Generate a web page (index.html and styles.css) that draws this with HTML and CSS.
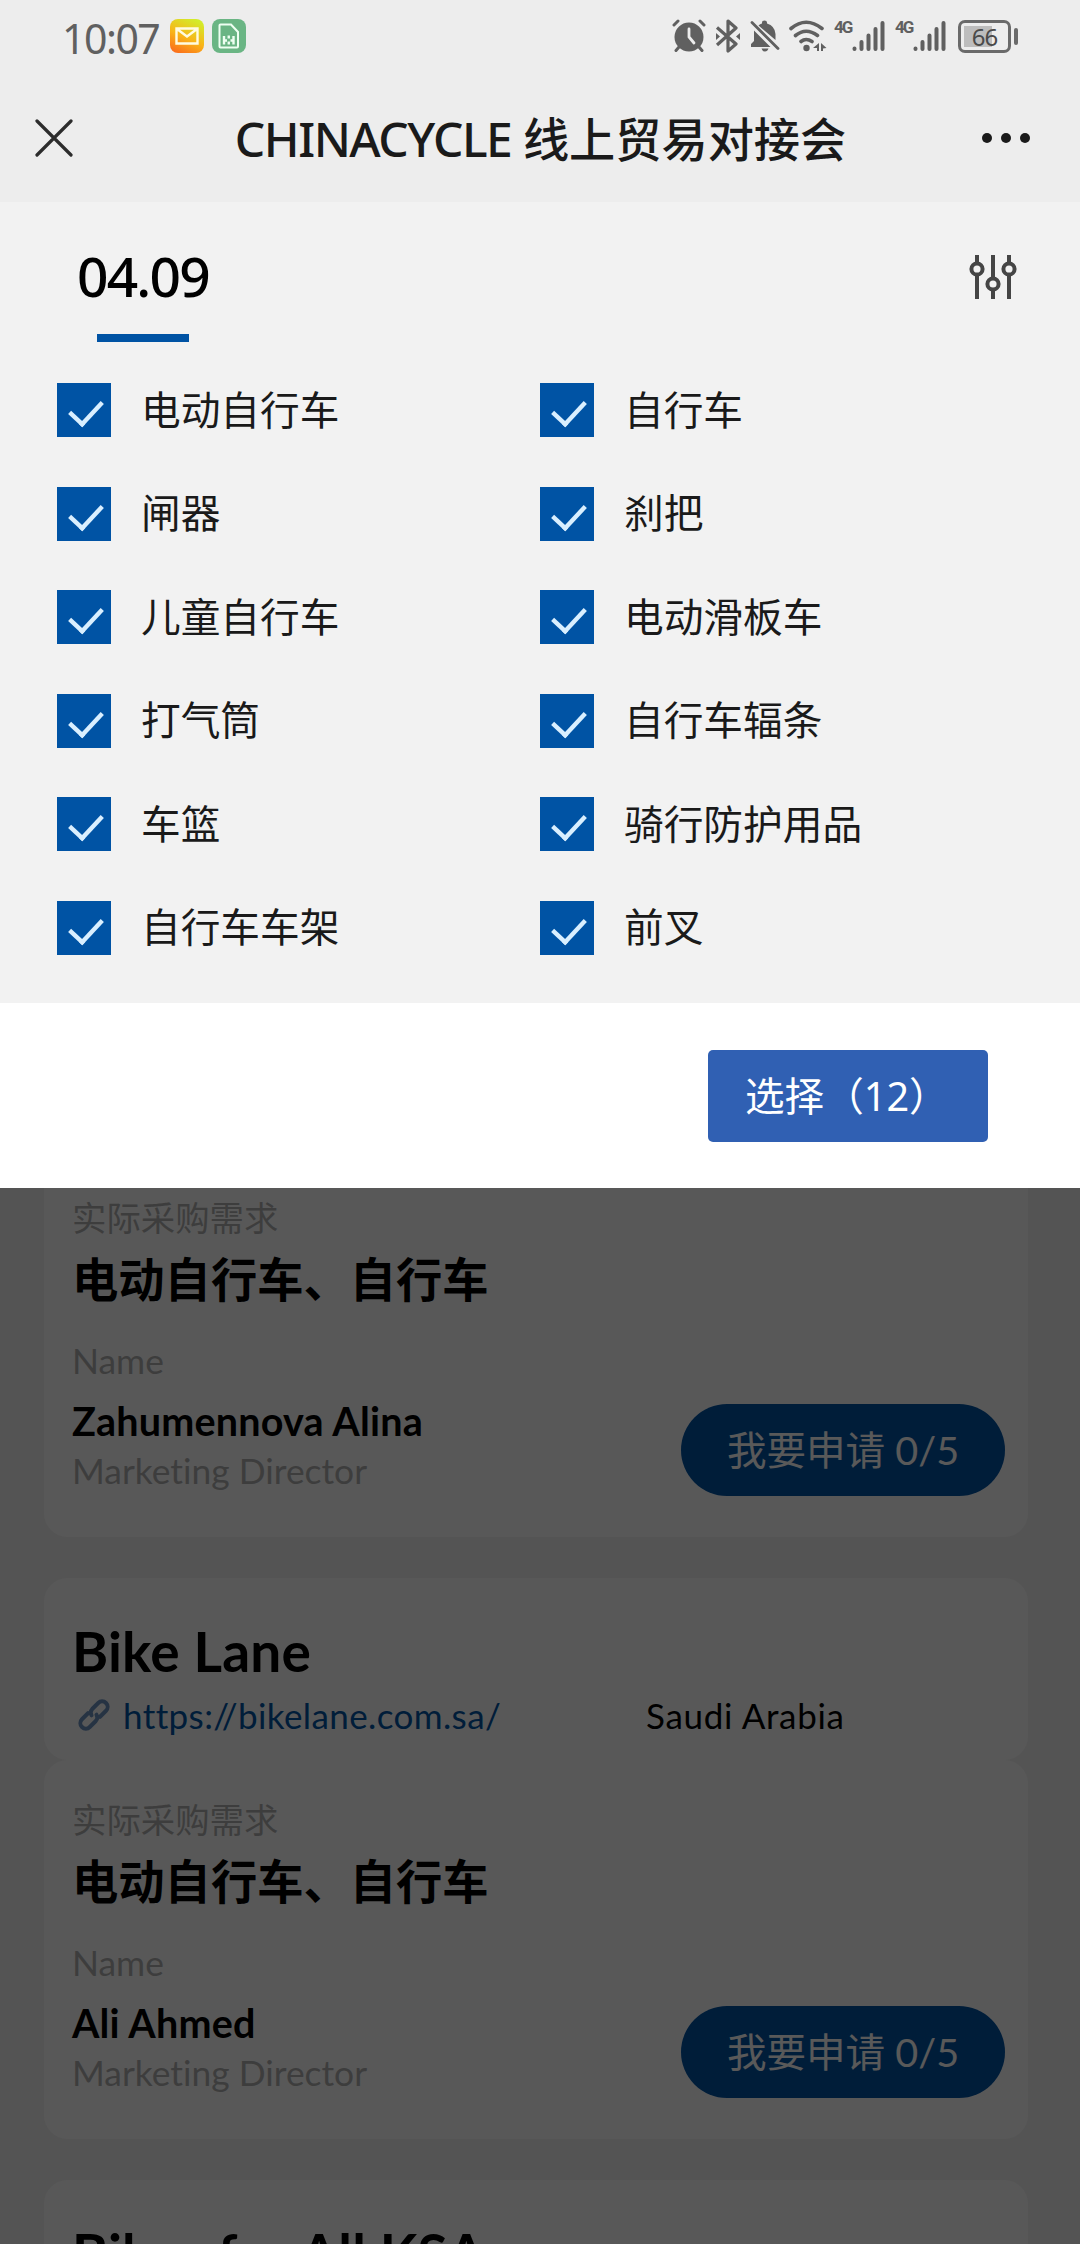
FILE: index.html
```html
<!DOCTYPE html>
<html lang="zh-CN">
<head>
    <meta charset="UTF-8">
    <meta name="viewport" content="width=device-width, initial-scale=1.0">
    <title>CHINACYCLE 线上贸易对接会</title>
    <link rel="stylesheet" href="styles.css">
</head>
<body>

<!-- 状态栏 -->
<div class="status-bar">
    <span class="time">10:07</span>
    <span class="app-icon mail">
        <svg width="24" height="18" viewBox="0 0 24 18" fill="none" stroke="#fffbe0" stroke-width="2.4"><path d="M1.5 1.5h21v15h-21zM2 2l10 7.500L22 2"/></svg>
    </span>
    <span class="app-icon sim">
        <svg width="22" height="26" viewBox="0 0 22 26" fill="none" stroke="#eefff2" stroke-width="2"><path d="M1.500 2.500a1 1 0 0 1 1-1H13l7 7.500v14.500a1 1 0 0 1-1 1H2.500a1 1 0 0 1-1-1z"/><path stroke-width="2.400" d="M6 13v8.500M15.500 13v8.500M10.750 12.500v3M10.750 18.500v3M6 17.500h3M12.500 17.500h3"/></svg>
    </span>
    <div class="status-icons">
        <svg width="34" height="34" viewBox="0 0 34 34" fill="none" stroke="#606060" stroke-width="3" stroke-linecap="round"><circle cx="17" cy="18" r="14.500" fill="#606060" stroke="none"/><path d="M2 6l4-4M32 6l-4-4M7 28l-3 3.500M27 28l3 3.500"/><path stroke="#ededed" stroke-width="2.800" d="M17 10v8l5 6"/></svg>
        <svg class="bluetooth" width="26" height="34" viewBox="0 0 26 34" fill="none" stroke="#606060" stroke-width="3.200" stroke-linejoin="round"><path d="M2 8.500L21 25l-8 7V2l8 7L2 26"/><path fill="#606060" stroke="none" d="M1 14v7l4-3.500zM25 14v7l-4-3.500z"/></svg>
        <svg class="mute" width="30" height="34" viewBox="0 0 30 34"><path fill="#606060" d="M4 11.500L20.500 28H1v-3l3-3zM8.500 6.500Q10 5 12 4.500V3.500Q12 1.500 14.500 1.500T17 3.500v1Q25 7 25.500 15v6zM11.500 29.500h7q-1 3-3.500 3t-3.500-3z"/><path stroke="#606060" stroke-width="2.800" stroke-linecap="round" d="M2 3.500l26 26"/></svg>
        <svg class="wifi" width="39" height="34" viewBox="0 0 39 34" fill="none" stroke="#606060" stroke-width="3.600" stroke-linecap="round"><path d="M3 9.500Q18 -3 34 9.500M7.500 16.500Q18 8 29.500 16.500M13 22.500Q18 18.500 24 22.500"/><circle cx="18.500" cy="29" r="3.200" fill="#606060" stroke="none"/><path fill="#606060" stroke="none" d="M31 24v8h-2v-3h-4zM33 24v8h2v-2.500l3.500-.5z"/></svg>
        <span class="signal">
            <b>4G</b>
            <svg width="33" height="32" viewBox="0 0 33 32" stroke="#606060" stroke-width="4" stroke-linecap="round"><path d="M2.500 28.500v.5M9.500 22v7M16.500 15.500v13.500M23.500 9v20M30.500 3v26"/></svg>
        </span>
        <span class="signal">
            <b>4G</b>
            <svg width="33" height="32" viewBox="0 0 33 32" stroke="#606060" stroke-width="4" stroke-linecap="round"><path d="M2.500 28.500v.5M9.500 22v7M16.500 15.500v13.500M23.500 9v20M30.500 3v26"/></svg>
        </span>
        <span class="battery">66</span>
        <i class="battery-cap"></i>
    </div>
</div>

<!-- 標題列 -->
<div class="nav-bar">
    <svg class="close" width="38" height="38" viewBox="0 0 38 38" stroke="#2c2c2c" stroke-width="3.200" stroke-linecap="round"><path d="M2 2l34 34M36 2L2 36"/></svg>
    <h1 class="title"><span>CHINACYCLE</span> 线上贸易对接会</h1>
    <div class="more"><i></i><i></i><i></i></div>
</div>

<!-- 篩選面板 -->
<div class="filter">
    <div class="filter-head">
        <div class="date">04.09</div>
        <svg width="48" height="46" viewBox="0 0 48 46" fill="none" stroke="#454545" stroke-width="4"><path d="M8 1v8M8 21v24M24 1v23M24 36v9M40 1v8M40 21v24"/><circle cx="8" cy="15" r="5.600"/><circle cx="24" cy="30" r="5.600"/><circle cx="40" cy="15" r="5.600"/></svg>
    </div>
    <div class="options">
        <label class="option"><i class="check"></i>电动自行车</label>
        <label class="option"><i class="check"></i>自行车</label>
        <label class="option"><i class="check"></i>闸器</label>
        <label class="option"><i class="check"></i>刹把</label>
        <label class="option"><i class="check"></i>儿童自行车</label>
        <label class="option"><i class="check"></i>电动滑板车</label>
        <label class="option"><i class="check"></i>打气筒</label>
        <label class="option"><i class="check"></i>自行车辐条</label>
        <label class="option"><i class="check"></i>车篮</label>
        <label class="option"><i class="check"></i>骑行防护用品</label>
        <label class="option"><i class="check"></i>自行车车架</label>
        <label class="option"><i class="check"></i>前叉</label>
    </div>
</div>
<div class="filter-foot">
    <button class="select-btn">选择（<span>12</span>）</button>
</div>

<!-- 買家列表 -->
<div class="list">
    <div class="card">
        <div class="card-body first">
            <p class="label">实际采购需求</p>
            <p class="demand">电动自行车、自行车</p>
            <div class="contact">
                <div>
                    <p class="label">Name</p>
                    <p class="name">Zahumennova Alina</p>
                    <p class="label">Marketing Director</p>
                </div>
                <button class="apply-btn">我要申请 0/5</button>
            </div>
        </div>
    </div>

    <div class="card">
        <div class="card-head">
            <h2 class="company">Bike Lane</h2>
            <div class="info">
                <svg width="32" height="34" viewBox="0 0 32 34" fill="none" stroke="#6d93c0" stroke-width="4" stroke-linecap="round"><g transform="rotate(-45 16 17)"><path d="M13 11.500H4.500a5.500 5.500 0 0 0 0 11H13a5.500 5.500 0 0 0 5-4M19 22.500h8.500a5.500 5.500 0 0 0 0-11H19a5.500 5.500 0 0 0-5 4"/></g></svg>
                <a class="link">https://bikelane.com.sa/</a>
                <span class="country">Saudi Arabia</span>
            </div>
        </div>
        <div class="card-body">
            <p class="label">实际采购需求</p>
            <p class="demand">电动自行车、自行车</p>
            <div class="contact">
                <div>
                    <p class="label">Name</p>
                    <p class="name">Ali Ahmed</p>
                    <p class="label">Marketing Director</p>
                </div>
                <button class="apply-btn">我要申请 0/5</button>
            </div>
        </div>
    </div>

    <div class="card">
        <div class="card-head">
            <h2 class="company">Bikes for All KSA</h2>
        </div>
    </div>

    <div class="mask"></div>
</div>

</body>
</html>
```

FILE: styles.css
```css
* {
    box-sizing: border-box;
}

body {
    font-family: Lato, "Noto Sans CJK SC", sans-serif;
    font-variant-ligatures: none;
    width: 1080px;
    height: 2244px;
    margin: 0;
    display: flex;
    flex-direction: column;
    overflow: hidden;
    background-color: #ededed;
    color: #1a1a1a;
}

h1, h2, p {
    margin: 0;
}

button {
    font-family: inherit;
    border: none;
    padding: 0;
}

svg {
    display: block;
    flex-shrink: 0;
}

/* 狀態欄 */
.status-bar {
    height: 76px;
    padding: 0 62px;
    display: flex;
    align-items: center;
    color: #606060;
}

.time {
    font-family: "Noto Sans", sans-serif;
    font-size: 41px;
    line-height: 76px;
    letter-spacing: -1.5px;
    width: 108px;
}

.app-icon {
    width: 34px;
    height: 34px;
    border-radius: 8px;
    margin: 0 8px 4px 0;
    display: flex;
    align-items: center;
    justify-content: center;
}

.app-icon.mail {
    background: linear-gradient(25deg, #fb6c1c 5%, #f9b418 45%, #d3ec2a 90%);
}

.app-icon.sim {
    background-color: #6ab584;
}

.status-icons {
    flex: 1;
    display: flex;
    align-items: center;
    justify-content: flex-end;
    padding-bottom: 4px;
}

.bluetooth {
    margin-left: 9px;
}

.mute {
    margin-left: 9px;
}

.wifi {
    margin-left: 8px;
}

.signal {
    display: flex;
    margin-left: 7px;
}

.signal + .signal {
    margin-left: 10px;
}

.signal b {
    font-family: Roboto, sans-serif;
    font-size: 17px;
    line-height: 14px;
    letter-spacing: -2px;
    width: 18px;
}

.battery {
    width: 53px;
    height: 33px;
    margin-left: 12px;
    border: 3px solid #6a6a6a;
    border-radius: 7px;
    background: linear-gradient(#bdbdbd, #bdbdbd) 3px 3px / 28px 21px no-repeat;
    font-family: "Noto Sans", sans-serif;
    font-size: 24px;
    line-height: 28px;
    letter-spacing: -1px;
    text-align: center;
    color: #4a4a4a;
}

.battery-cap {
    width: 4px;
    height: 17px;
    margin-left: 3px;
    border-radius: 2px;
    background-color: #6a6a6a;
}

/* 標題列 */
.nav-bar {
    height: 126px;
    padding: 0 50px 0 35px;
    display: flex;
    align-items: center;
    justify-content: space-between;
}

.close {
    margin-bottom: 2px;
}

.title {
    font-size: 46.2px;
    font-weight: 500;
    line-height: 126px;
    padding-left: 26px;
    white-space: nowrap;
}

.title span {
    font-family: "Noto Sans", sans-serif;
    font-size: 48px;
    letter-spacing: -1.5px;
}

.more {
    display: flex;
    gap: 9px;
    margin-bottom: 3px;
}

.more i {
    width: 10px;
    height: 10px;
    border-radius: 50%;
    background-color: #1a1a1a;
}

/* 篩選面板 */
.filter {
    height: 801px;
    background-color: #f2f2f2;
}

.filter-head {
    height: 181px;
    padding: 42px 63px 0 77px;
    display: flex;
    justify-content: space-between;
}

.filter-head svg {
    margin-top: 10px;
}

.date {
    font-family: "Noto Sans", sans-serif;
    font-size: 55px;
    font-weight: 500;
    line-height: 64px;
    letter-spacing: -1.8px;
    color: #000;
}

.date::after {
    content: "";
    display: block;
    width: 92px;
    height: 8px;
    margin: 26px 0 0 20px;
    background-color: #0053a4;
}

.options {
    display: grid;
    grid-template-columns: 483px 1fr;
    row-gap: 49.6px;
    padding-left: 57px;
}

.option {
    height: 54px;
    display: flex;
    align-items: center;
    gap: 30px;
    font-size: 39.7px;
    line-height: 52px;
    padding-bottom: 1px;
}

.check {
    width: 54px;
    height: 54px;
    margin-bottom: -1px;
    background-color: #0053a4;
}

.check::after {
    content: "";
    display: block;
    width: 17px;
    height: 31px;
    margin: 8px 0 0 18px;
    border: solid #d9efff;
    border-width: 0 5px 5px 0;
    transform: rotate(43deg) scale(0.88);
}

.filter-foot {
    height: 185px;
    padding: 47px 92px 0 0;
    display: flex;
    justify-content: flex-end;
    background-color: #fff;
}

.select-btn {
    width: 280px;
    height: 92px;
    padding-left: 37px;
    border-radius: 5px;
    background-color: #3060b3;
    color: #fff;
    font-size: 39.6px;
    line-height: 88px;
    text-align: left;
    white-space: nowrap;
}

.select-btn span {
    font-family: "Noto Sans", sans-serif;
}

/* 買家列表 */
.list {
    position: relative;
    flex: 1;
    padding: 0 52px 0 44px;
    overflow: hidden;
    background-color: #f1f1f1;
    color: #000;
}

.mask {
    position: absolute;
    inset: 0;
    background-color: rgba(0, 0, 0, 0.65);
}

.card {
    margin-bottom: 41px;
}

.card-head,
.card-body {
    background-color: #fdfdfd;
    border-radius: 24px;
    padding-left: 28px;
}

.card-head {
    height: 182px;
    padding-top: 40px;
}

.card-body {
    height: 379px;
    padding-top: 36px;
}

/* 第一張卡片上半部被面板遮住 */
.card-body.first {
    height: 349px;
    padding-top: 6px;
    border-radius: 0 0 24px 24px;
}

.company {
    font-size: 55px;
    font-weight: 700;
    line-height: 66px;
    letter-spacing: 0.2px;
}

.info {
    display: flex;
    align-items: center;
    font-size: 35px;
    line-height: 48px;
    margin-top: 7px;
}

.info svg {
    margin: 0 13px 0 6px;
}

.link {
    width: 523px;
    color: #0053a4;
    letter-spacing: 0.4px;
}

.country {
    letter-spacing: 0.7px;
}

.label {
    font-size: 34.4px;
    line-height: 48px;
    color: #b0b0b0;
}

.demand {
    font-size: 46.3px;
    font-weight: 700;
    line-height: 64px;
    margin-top: 5px;
}

.contact {
    display: flex;
    justify-content: space-between;
    align-items: flex-end;
    margin-top: 26px;
    padding-right: 23px;
}

.contact .label {
    font-size: 35.4px;
}

.name {
    font-size: 39.5px;
    font-weight: 700;
    line-height: 50px;
    letter-spacing: 0.2px;
    margin: 11px 0 1px;
}

.apply-btn {
    width: 324px;
    height: 92px;
    margin-bottom: -1px;
    border-radius: 46px;
    background-color: #0053a4;
    color: #fff;
    font-size: 39.6px;
    line-height: 90px;
}
```
